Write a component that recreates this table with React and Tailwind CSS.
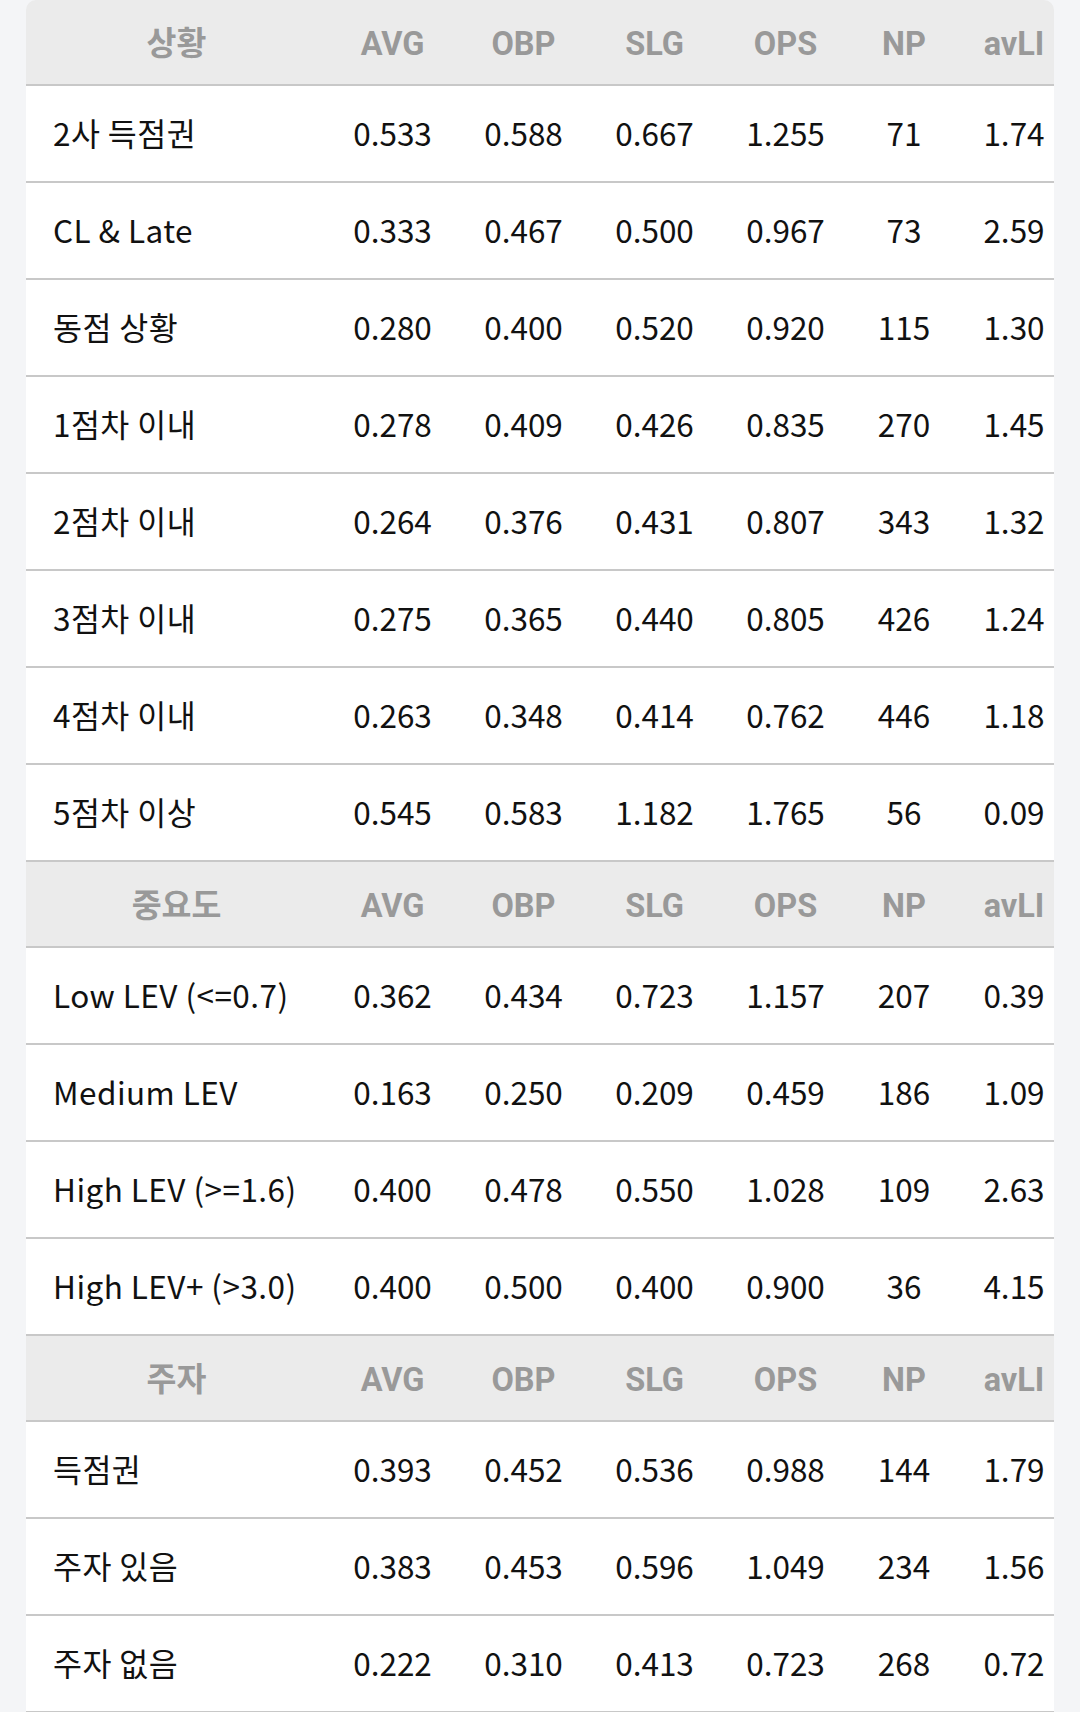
import React from "react";

// Situation split tables (상황 / 중요도 / 주자)
const sections = [
    {
        title: "상황",
        rows: [
            ["2사 득점권", "0.533", "0.588", "0.667", "1.255", "71", "1.74"],
            ["CL & Late", "0.333", "0.467", "0.500", "0.967", "73", "2.59"],
            ["동점 상황", "0.280", "0.400", "0.520", "0.920", "115", "1.30"],
            ["1점차 이내", "0.278", "0.409", "0.426", "0.835", "270", "1.45"],
            ["2점차 이내", "0.264", "0.376", "0.431", "0.807", "343", "1.32"],
            ["3점차 이내", "0.275", "0.365", "0.440", "0.805", "426", "1.24"],
            ["4점차 이내", "0.263", "0.348", "0.414", "0.762", "446", "1.18"],
            ["5점차 이상", "0.545", "0.583", "1.182", "1.765", "56", "0.09"],
        ],
    },
    {
        title: "중요도",
        rows: [
            ["Low LEV (<=0.7)", "0.362", "0.434", "0.723", "1.157", "207", "0.39"],
            ["Medium LEV", "0.163", "0.250", "0.209", "0.459", "186", "1.09"],
            ["High LEV (>=1.6)", "0.400", "0.478", "0.550", "1.028", "109", "2.63"],
            ["High LEV+ (>3.0)", "0.400", "0.500", "0.400", "0.900", "36", "4.15"],
        ],
    },
    {
        title: "주자",
        rows: [
            ["득점권", "0.393", "0.452", "0.536", "0.988", "144", "1.79"],
            ["주자 있음", "0.383", "0.453", "0.596", "1.049", "234", "1.56"],
            ["주자 없음", "0.222", "0.310", "0.413", "0.723", "268", "0.72"],
        ],
    },
];

const columns = ["AVG", "OBP", "SLG", "OPS", "NP", "avLI"];

const gridCols = "grid grid-cols-[301px_131px_131px_131px_131px_106px_114px] items-center";

function HeaderRow({ title }) {
    return (
        <div className={`${gridCols} h-[86px] pt-[4px] bg-[#ebebeb] border-b-2 border-[#c8c8c8] text-[#999999] font-bold text-[32.5px] font-['Roboto','Noto_Sans_CJK_KR',sans-serif]`}>
            <div className="text-center">{title}</div>
            {columns.map((col) => (
                <div key={col} className="text-center">
                    {col}
                </div>
            ))}
        </div>
    );
}

function DataRow({ row }) {
    return (
        <div className={`${gridCols} h-[97px] pb-[2px] bg-white border-b-2 border-[#c8c8c8] text-[#111111] text-[31.5px] font-['Noto_Sans_CJK_KR',sans-serif]`}>
            <div className="pl-[27px] whitespace-nowrap tracking-[0.45px]">{row[0]}</div>
            {row.slice(1).map((value, i) => (
                <div key={i} className="text-center">
                    {value}
                </div>
            ))}
        </div>
    );
}

export default function App() {
    return (
        <div className="min-h-[1712px] w-[1080px] bg-[#f4f5f7] px-[26px]">
            <div className="w-[1028px] overflow-hidden rounded-t-[10px]">
                <div className="w-[1045px]">
                    {sections.map((section) => (
                        <div key={section.title}>
                            <HeaderRow title={section.title} />
                            {section.rows.map((row) => (
                                <DataRow key={row[0]} row={row} />
                            ))}
                        </div>
                    ))}
                </div>
            </div>
        </div>
    );
}
